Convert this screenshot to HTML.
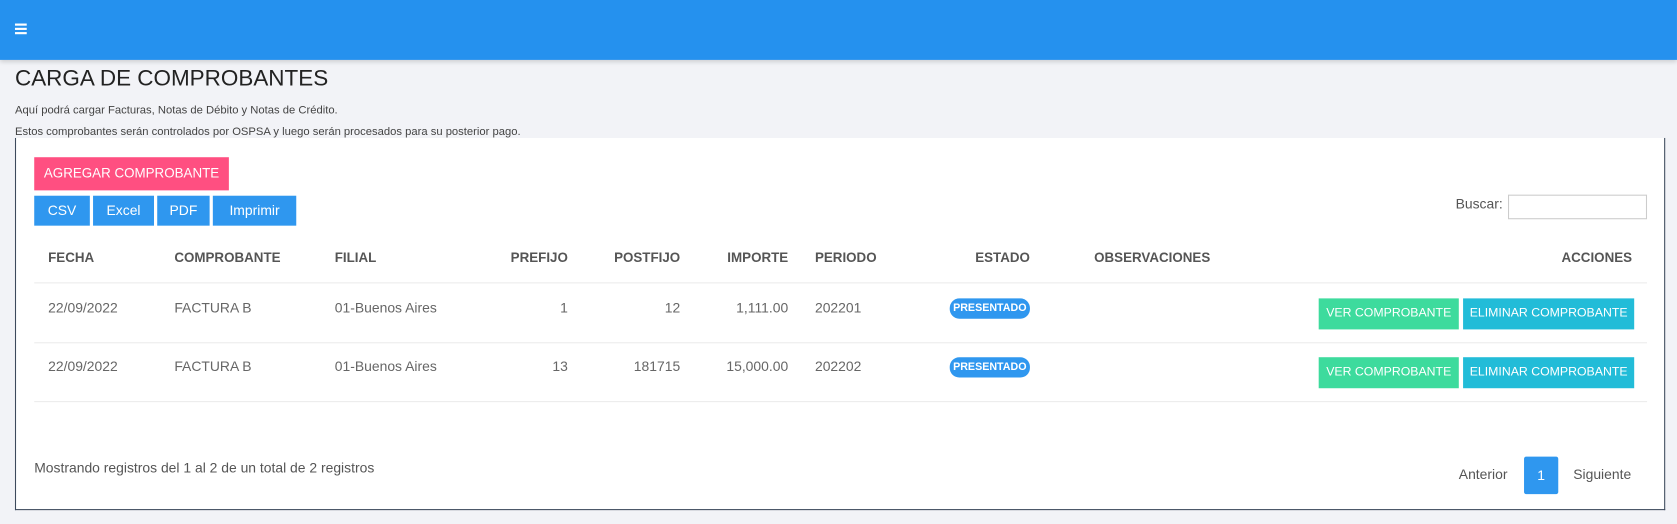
<!DOCTYPE html>
<html><head><meta charset="utf-8"><style>
*{margin:0;padding:0;box-sizing:border-box}
body{width:1677px;height:524px;background:#f2f3f7;font-family:"Liberation Sans",sans-serif;position:relative;overflow:hidden;color:#555}
#w{position:absolute;left:0;top:0;width:1568px;height:490px;transform:scale(1.0695);transform-origin:0 0}
.a{position:absolute;white-space:nowrap}
.hdr{left:0;top:0;width:1568px;height:56px;background:#2591ee;box-shadow:0 2px 4px rgba(0,0,0,.15)}
.card{left:14px;top:129px;width:1543px;height:348px;background:#fff;border:1px solid #3d4a5c;border-top:none}
.btn{color:#fff;font-size:13px;text-align:center}
.th{top:234px;font-size:12.5px;font-weight:bold;color:#555}
.td{font-size:13px;color:#666}
.r{text-align:right}
.line{left:32px;width:1508px;height:1px;background:#ececec}
.badge{background:#2f97ef;color:#fff;font-size:10px;font-weight:bold;border-radius:9px;width:75px;height:19px;line-height:19px;text-align:center;left:888px}
.ver{left:1233px;width:131px;height:29px;line-height:29px;background:#3ddb9d;color:#fff;font-size:11.5px;text-align:center}
.eli{left:1368px;width:160px;height:29px;line-height:29px;background:#22bcd8;color:#fff;font-size:11.5px;text-align:center}
</style></head><body><div id="w">
<div class="a hdr"></div>
<div class="a" style="left:14px;top:22px;width:11px;height:2px;background:#fff;box-shadow:0 4px 0 #fff,0 8px 0 #fff"></div>
<div class="a" style="left:14px;top:62px;font-size:21px;color:#222">CARGA DE COMPROBANTES</div>
<div class="a" style="left:14px;top:97px;font-size:10.5px;color:#444">Aquí podrá cargar Facturas, Notas de Débito y Notas de Crédito.</div>
<div class="a" style="left:14px;top:117px;font-size:10.5px;color:#444">Estos comprobantes serán controlados por OSPSA y luego serán procesados para su posterior pago.</div>
<div class="a card"></div>
<div class="a btn" style="left:32px;top:147px;width:182px;height:31px;line-height:31px;background:#ff4f81;font-size:12.5px">AGREGAR COMPROBANTE</div>
<div class="a btn" style="left:32px;top:183px;width:52px;height:28px;line-height:28px;background:#2f97ef">CSV</div>
<div class="a btn" style="left:87px;top:183px;width:57px;height:28px;line-height:28px;background:#2f97ef">Excel</div>
<div class="a btn" style="left:147px;top:183px;width:49px;height:28px;line-height:28px;background:#2f97ef">PDF</div>
<div class="a btn" style="left:199px;top:183px;width:78px;height:28px;line-height:28px;background:#2f97ef">Imprimir</div>
<div class="a" style="left:1361px;top:183px;font-size:13px;color:#555">Buscar:</div>
<div class="a" style="left:1410px;top:182px;width:130px;height:23px;border:1px solid #ccc;background:#fff"></div>
<div class="a th" style="left:45px">FECHA</div>
<div class="a th" style="left:163px">COMPROBANTE</div>
<div class="a th" style="left:313px">FILIAL</div>
<div class="a th r" style="right:1037px">PREFIJO</div>
<div class="a th r" style="right:932px">POSTFIJO</div>
<div class="a th r" style="right:831px">IMPORTE</div>
<div class="a th" style="left:762px">PERIODO</div>
<div class="a th r" style="right:605px">ESTADO</div>
<div class="a th" style="left:1023px">OBSERVACIONES</div>
<div class="a th r" style="right:42px">ACCIONES</div>
<div class="a line" style="top:264px"></div>
<div class="a td" style="left:45px;top:280px">22/09/2022</div>
<div class="a td" style="left:163px;top:280px">FACTURA B</div>
<div class="a td" style="left:313px;top:280px">01-Buenos Aires</div>
<div class="a td r" style="right:1037px;top:280px">1</div>
<div class="a td r" style="right:932px;top:280px">12</div>
<div class="a td r" style="right:831px;top:280px">1,111.00</div>
<div class="a td" style="left:762px;top:280px">202201</div>
<div class="a badge" style="top:279px">PRESENTADO</div>
<div class="a ver" style="top:279px">VER COMPROBANTE</div>
<div class="a eli" style="top:279px">ELIMINAR COMPROBANTE</div>
<div class="a line" style="top:320px"></div>
<div class="a td" style="left:45px;top:335px">22/09/2022</div>
<div class="a td" style="left:163px;top:335px">FACTURA B</div>
<div class="a td" style="left:313px;top:335px">01-Buenos Aires</div>
<div class="a td r" style="right:1037px;top:335px">13</div>
<div class="a td r" style="right:932px;top:335px">181715</div>
<div class="a td r" style="right:831px;top:335px">15,000.00</div>
<div class="a td" style="left:762px;top:335px">202202</div>
<div class="a badge" style="top:334px">PRESENTADO</div>
<div class="a ver" style="top:334px">VER COMPROBANTE</div>
<div class="a eli" style="top:334px">ELIMINAR COMPROBANTE</div>
<div class="a line" style="top:375px"></div>
<div class="a" style="left:32px;top:430px;font-size:13px;color:#555">Mostrando registros del 1 al 2 de un total de 2 registros</div>
<div class="a" style="left:1364px;top:436px;font-size:13px;color:#555">Anterior</div>
<div class="a" style="left:1425px;top:427px;width:32px;height:35px;line-height:35px;background:#2f97ef;color:#fff;font-size:13px;text-align:center;border-radius:2px">1</div>
<div class="a" style="left:1471px;top:436px;font-size:13px;color:#555">Siguiente</div>
</div></body></html>
